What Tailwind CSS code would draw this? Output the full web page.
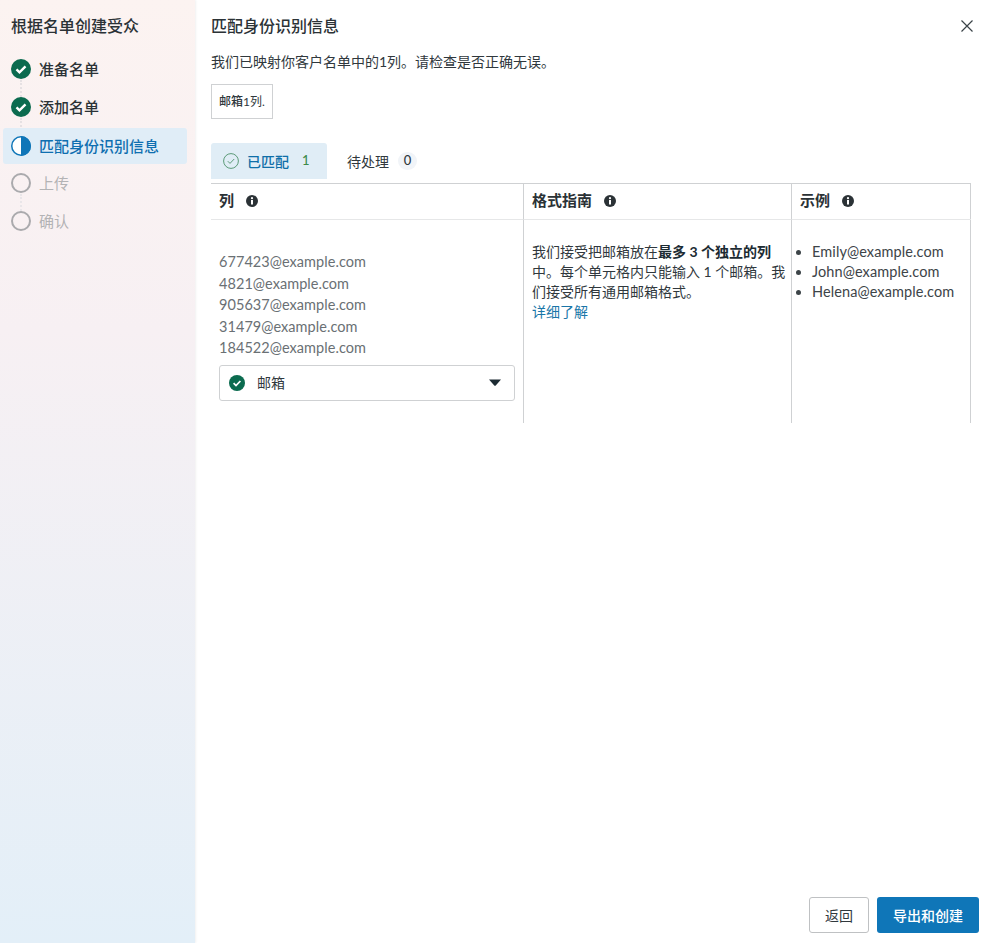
<!DOCTYPE html>
<html lang="zh-CN">
<head>
  <meta charset="UTF-8" />
  <title>根据名单创建受众</title>
  <script src="https://cdn.jsdelivr.net/npm/@tailwindcss/browser@4"></script>
</head>
<body class="bg-white font-['Lato','Noto_Sans_CJK_SC',sans-serif] text-[#1c2b33]">
  <div class="flex h-[943px] w-[995px] overflow-hidden">
    <!-- sidebar -->
    <aside class="relative z-10 w-[195px] shrink-0 bg-gradient-to-b from-[#fcf3f1] via-[#f7f0f3] via-35% to-[#e3eff8] pl-[3px] pr-[8px] pt-[16px] shadow-[1px_0_2px_rgba(0,0,0,0.06)]">
      <h1 class="pl-[8px] text-[16px] font-medium leading-[20px] text-[#2b3236]">根据名单创建受众</h1>
      <ol class="mt-[15px] flex flex-col gap-[2px]">
        <li class="relative flex h-[36px] items-center gap-[8px] pl-[8px] text-[15px] font-medium text-[#2b3236]">
          <svg class="h-[20px] w-[20px]" viewBox="0 0 20 20"><circle cx="10" cy="10" r="10" fill="#0b6b4f"/><path d="M5.5 10.3l3 3 6-6" fill="none" stroke="#fff" stroke-width="2.4"/></svg>
          准备名单
          <span class="absolute left-[17px] top-[29px] h-[17px] border-l-2 border-dotted border-[#e6e1e3]"></span>
        </li>
        <li class="relative flex h-[36px] items-center gap-[8px] pl-[8px] text-[15px] font-medium text-[#2b3236]">
          <svg class="h-[20px] w-[20px]" viewBox="0 0 20 20"><circle cx="10" cy="10" r="10" fill="#0b6b4f"/><path d="M5.5 10.3l3 3 6-6" fill="none" stroke="#fff" stroke-width="2.4"/></svg>
          添加名单
          <span class="absolute left-[17px] top-[29px] h-[9px] border-l-2 border-dotted border-[#e6e1e3]"></span>
        </li>
        <li class="relative top-[1px] flex h-[36px] items-center gap-[8px] rounded-[3px] bg-[#e0edf7] pl-[8px] text-[15px] font-medium text-[#0f6fb0]">
          <svg class="h-[20px] w-[20px]" viewBox="0 0 20 20"><circle cx="10" cy="10" r="9.25" fill="#fff" stroke="#0f76b8" stroke-width="1.5"/><path d="M10 0a10 10 0 0 1 0 20z" fill="#0f76b8"/></svg>
          匹配身份识别信息
        </li>
        <li class="relative flex h-[36px] items-center gap-[8px] pl-[8px] text-[15px] text-[#b3b3b5]">
          <svg class="h-[20px] w-[20px]" viewBox="0 0 20 20"><circle cx="10" cy="10" r="9" fill="none" stroke="#aaaaad" stroke-width="2"/></svg>
          上传
          <span class="absolute left-[17px] top-[29px] h-[17px] border-l-2 border-dotted border-[#e9e6e9]"></span>
        </li>
        <li class="flex h-[36px] items-center gap-[8px] pl-[8px] text-[15px] text-[#b3b3b5]">
          <svg class="h-[20px] w-[20px]" viewBox="0 0 20 20"><circle cx="10" cy="10" r="9" fill="none" stroke="#aaaaad" stroke-width="2"/></svg>
          确认
        </li>
      </ol>
    </aside>

    <!-- main -->
    <main class="relative flex flex-1 flex-col pl-[16px] pr-[24px]">
      <div class="flex items-center justify-between pt-[16px]">
        <h2 class="text-[16px] font-medium leading-[20px] text-[#2b3236]">匹配身份识别信息</h2>
        <button class="absolute right-[22px] top-[20px]">
          <svg class="h-[12px] w-[12px]" viewBox="0 0 12 12"><path d="M.5.5l11 11M11.5.5l-11 11" stroke="#3a4348" stroke-width="1.2" fill="none"/></svg>
        </button>
      </div>
      <p class="mt-[17px] text-[14px] leading-[18px] text-[#30383d]">我们已映射你客户名单中的1列。请检查是否正确无误。</p>
      <div class="mt-[13px] flex h-[35px] w-[62px] items-center justify-center border border-[#cfd1d3] text-[12px] text-[#30383d]"><span class="font-medium">邮箱</span>1列.</div>

      <!-- tabs -->
      <div class="mt-[24px] flex h-[36px] items-center">
        <div class="flex h-[36px] w-[116px] items-center rounded-t-[3px] bg-[#e0edf6] pl-[12px] text-[14px]">
          <svg class="h-[16px] w-[16px]" viewBox="0 0 16 16"><circle cx="8" cy="8" r="7.4" fill="none" stroke="#5c9a78" stroke-width="1"/><path d="M4.8 8.2l2.2 2.2 4.2-4.4" fill="none" stroke="#5c9a78" stroke-width="1"/></svg>
          <span class="ml-[8px] font-medium text-[#0f6fa8]">已匹配</span>
          <span class="ml-[13px] text-[13px] font-medium text-[#3c8a4a]">1</span>
        </div>
        <div class="ml-[20px] flex items-center text-[14px] text-[#30383d]">
          待处理
          <span class="ml-[9px] flex h-[18px] w-[19px] items-center justify-center rounded-full bg-[#f1f4f8] text-[13px] font-medium">0</span>
        </div>
      </div>

      <!-- table -->
      <div class="mt-[4px] grid h-[240px] w-[760px] grid-cols-[312px_268px_180px] grid-rows-[36px_1fr] border-t border-r border-[#cfd1d3]">
        <div class="flex items-center gap-[12px] border-b border-[#e6e7e8] pb-[2px] pl-[8px] text-[15px] font-bold text-[#2b3236]">
          列
          <svg class="h-[12px] w-[12px]" viewBox="0 0 12 12"><circle cx="6" cy="6" r="6" fill="#2b3236"/><rect x="5" y="5" width="2" height="4.5" fill="#fff"/><circle cx="6" cy="3.2" r="1.1" fill="#fff"/></svg>
        </div>
        <div class="flex items-center gap-[12px] border-b border-l border-b-[#e6e7e8] border-l-[#cfd1d3] pb-[2px] pl-[8px] text-[15px] font-bold text-[#2b3236]">
          格式指南
          <svg class="h-[12px] w-[12px]" viewBox="0 0 12 12"><circle cx="6" cy="6" r="6" fill="#2b3236"/><rect x="5" y="5" width="2" height="4.5" fill="#fff"/><circle cx="6" cy="3.2" r="1.1" fill="#fff"/></svg>
        </div>
        <div class="flex items-center gap-[12px] border-b border-l border-b-[#e6e7e8] border-l-[#cfd1d3] pb-[2px] pl-[8px] text-[15px] font-bold text-[#2b3236]">
          示例
          <svg class="h-[12px] w-[12px]" viewBox="0 0 12 12"><circle cx="6" cy="6" r="6" fill="#2b3236"/><rect x="5" y="5" width="2" height="4.5" fill="#fff"/><circle cx="6" cy="3.2" r="1.1" fill="#fff"/></svg>
        </div>

        <div class="px-[8px] pt-[31px]">
          <div class="text-[14.5px] leading-[21.5px] tracking-[0.05px] text-[#6a7074]">
            <div>677423@example.com</div>
            <div>4821@example.com</div>
            <div>905637@example.com</div>
            <div>31479@example.com</div>
            <div>184522@example.com</div>
          </div>
          <div class="mt-[6px] flex h-[36px] w-[296px] items-center rounded-[3px] border border-[#cfd1d3] pl-[9px] pr-[13px] text-[14px] text-[#30383d]">
            <svg class="h-[16px] w-[16px]" viewBox="0 0 16 16"><circle cx="8" cy="8" r="8" fill="#0b6b4f"/><path d="M4.6 8.2l2.4 2.4 4.4-4.6" fill="none" stroke="#fff" stroke-width="1.7"/></svg>
            <span class="ml-[12px]">邮箱</span>
            <svg class="ml-auto h-[7px] w-[12px]" viewBox="0 0 12 7"><path d="M0 .5h12L7 6.3q-1 1-2 0z" fill="#1c2b33"/></svg>
          </div>
        </div>
        <div class="border-l border-[#cfd1d3] pl-[8px] pt-[22px] text-[14px] leading-[20px] text-[#30383d]">
          我们接受把邮箱放在<b class="font-bold text-[#1c2b33]">最多 3 个独立的列</b><br />中。每个单元格内只能输入 1 个邮箱。我<br />们接受所有通用邮箱格式。<br />
          <a class="text-[#1a76a8]">详细了解</a>
        </div>
        <div class="border-l border-[#cfd1d3] pt-[22px]">
          <ul class="list-disc pl-[20px] text-[14.5px] leading-[20px] tracking-[0.1px] text-[#3d4448]">
            <li>Emily@example.com</li>
            <li>John@example.com</li>
            <li>Helena@example.com</li>
          </ul>
        </div>
      </div>

      <!-- footer -->
      <div class="absolute bottom-[10px] right-[16px] flex gap-[8px]">
        <button class="h-[36px] w-[60px] rounded-[3px] border border-[#bfc1c3] bg-white text-[14px] text-[#30383d]">返回</button>
        <button class="h-[36px] w-[102px] rounded-[3px] bg-[#0f76b8] text-[14px] font-medium text-white">导出和创建</button>
      </div>
    </main>
  </div>
</body>
</html>
